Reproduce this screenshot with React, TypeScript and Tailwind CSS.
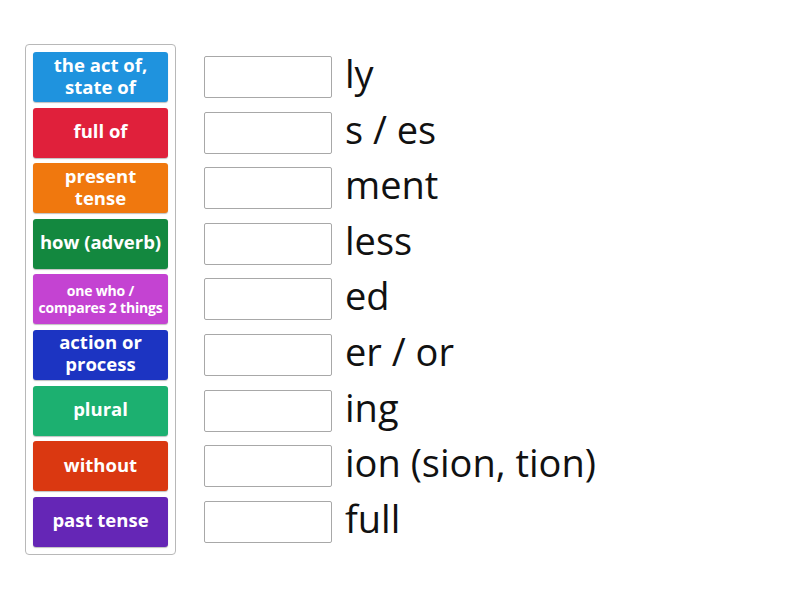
const TILES = [
  { text: 'the act of, state of', color: '#1f93de', small: false },
  { text: 'full of', color: '#e0203b', small: false },
  { text: 'present tense', color: '#f0780e', small: false },
  { text: 'how (adverb)', color: '#13883f', small: false },
  { text: 'one who / compares 2 things', color: '#c443d2', small: true },
  { text: 'action or process', color: '#1c34c2', small: false },
  { text: 'plural', color: '#1cb070', small: false },
  { text: 'without', color: '#da3811', small: false },
  { text: 'past tense', color: '#6526b6', small: false },
];

const WORDS = ['ly', 's / es', 'ment', 'less', 'ed', 'er / or', 'ing', 'ion (sion, tion)', 'full'];

export default function App() {
  return (
    <div
      className="w-[800px] h-[600px] bg-white flex items-start pt-[44px] pl-[25px]"
      style={{ fontFamily: '"Open Sans", "Noto Sans", sans-serif' }}
    >
      <div className="w-[151px] border border-[#b8b8b8] rounded-[4px] px-[7px] py-[7px] flex flex-col gap-[5.6px]">
        {TILES.map(t => (
          <div
            key={t.text}
            className="h-[50px] rounded-[3px] flex items-center justify-center text-center text-white font-bold shadow-[0_1px_1px_rgba(0,0,0,0.25)]"
            style={{ backgroundColor: t.color }}
          >
            <span className={t.small ? 'text-[14px] leading-[17px] tracking-[-0.2px]' : 'text-[18.5px] leading-[22px] -mt-[3px]'}>
              {t.small ? (
                <>one who /<br />compares 2 things</>
              ) : t.text === 'the act of, state of' ? (
                <>the act of,<br />state of</>
              ) : t.text === 'present tense' ? (
                <>present<br />tense</>
              ) : t.text === 'action or process' ? (
                <>action or<br />process</>
              ) : (
                t.text
              )}
            </span>
          </div>
        ))}
      </div>
      <div className="ml-[28px] mt-[12px] flex flex-col gap-[13.6px]">
        {WORDS.map(w => (
          <div key={w} className="flex items-center h-[42px]">
            <div className="w-[128px] h-[42px] border border-[#a8a8a8] rounded-[2px] bg-white" />
            <span className="ml-[13px] text-[38px] text-[#111] leading-none -mt-[8px]">{w}</span>
          </div>
        ))}
      </div>
    </div>
  );
}
